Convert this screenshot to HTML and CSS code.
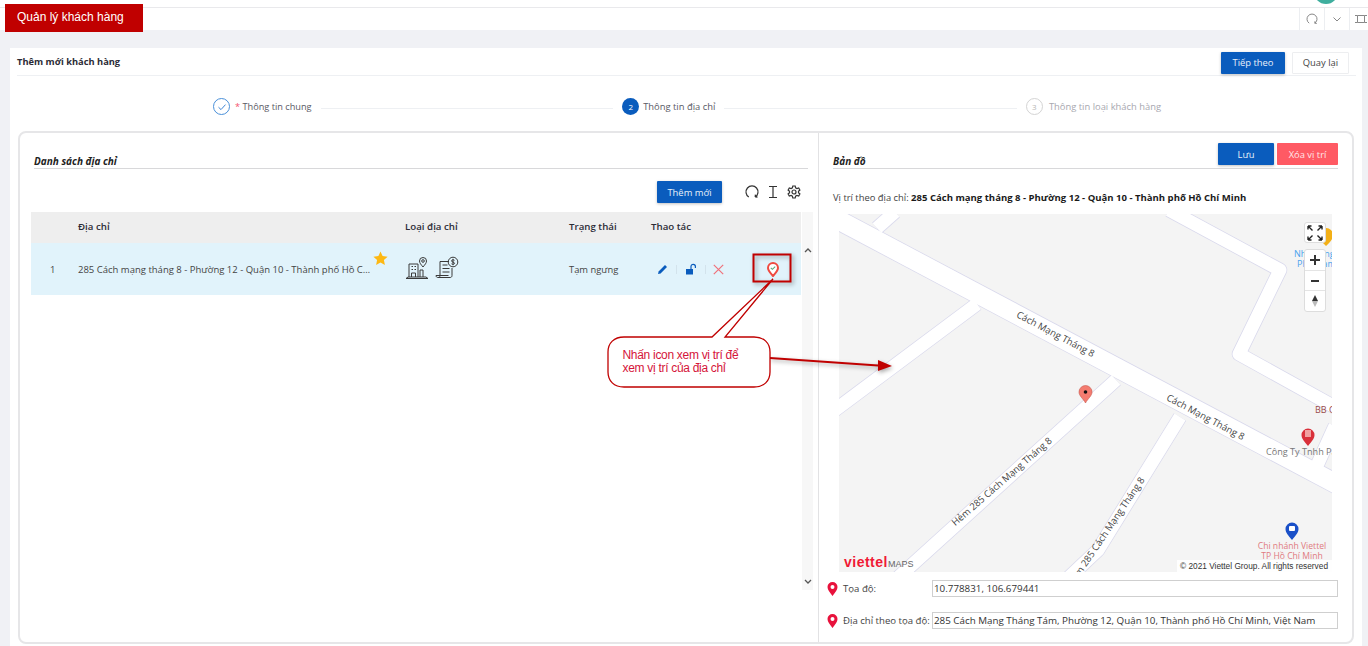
FILE: index.html
```html
<!DOCTYPE html>
<html lang="vi">
<head>
  <meta charset="UTF-8" />
  <meta name="viewport" content="width=device-width, initial-scale=1" />
  <title>Quản lý khách hàng</title>
  <link rel="stylesheet" href="styles.css">
</head>
<body>
  <div class="top-strip"><span class="avatar"></span></div>

  <div class="tab-bar">
    <span class="tab-tool">
      <svg width="12" height="12" viewBox="0 0 12 12"><path class="line-gray" d="M3.2 10.2A5 5 0 1 1 8.8 10.2M8.8 10.2l.2-2M8.8 10.2l2 .2"/></svg>
    </span>
    <span class="tab-tool">
      <svg width="10" height="10" viewBox="0 0 10 10"><path class="line-gray" d="M1.5 3.5 5 7l3.5-3.5"/></svg>
    </span>
    <span class="tab-tool tab-tool-last">
      <svg width="12" height="12" viewBox="0 0 12 12"><path class="line-gray" d="M2.5 2.5h7v7h-7zM0 2.5h2.500M9.500 2.500H12M0 9.500h2.500M9.500 9.500H12"/></svg>
    </span>
  </div>

  <div class="page-title">Quản lý khách hàng</div>

  <main class="content">
    <section class="card">
      <header class="card-head">
        <h1>Thêm mới khách hàng</h1>
        <div class="card-actions">
          <button class="btn btn-primary btn-next">Tiếp theo</button>
          <button class="btn btn-plain">Quay lại</button>
        </div>
      </header>

      <div class="steps">
        <div class="step">
          <span class="step-dot step-done">
            <svg width="10" height="10" viewBox="0 0 10 10"><path d="M1.500 5.200 4 7.600 8.500 2.600" fill="none" stroke="#3f86d6" stroke-width="1"/></svg>
          </span>
          <span class="step-text step-text-first"><span class="req">*</span> Thông tin chung</span>
        </div>
        <span class="step-line"></span>
        <div class="step step-current">
          <span class="step-dot step-active">2</span>
          <span class="step-text">Thông tin địa chỉ</span>
        </div>
        <span class="step-line"></span>
        <div class="step">
          <span class="step-dot step-todo">3</span>
          <span class="step-text step-text-todo">Thông tin loại khách hàng</span>
        </div>
      </div>

      <div class="panel">
        <div class="panel-left">
          <h2 class="section-title section-title-left">Danh sách địa chỉ</h2>

          <div class="table-tools">
            <button class="btn btn-primary btn-add">Thêm mới</button>
            <svg class="tool-icon" width="14" height="14" viewBox="0 0 14 14"><path class="line-dark" d="M3.800 12A6 6 0 1 1 10.200 12M10.200 12l.2-2.400M10.200 12l2.300.2"/></svg>
            <svg class="tool-icon" width="14" height="14" viewBox="0 0 14 14"><path class="line-dark" d="M3 1.500h8M3 12.500h8M7 1.500v11"/></svg>
            <svg class="tool-icon" width="14" height="14" viewBox="0 0 14 14"><path class="line-dark" d="M5.800 1h2.400l.4 1.800 1.300.7 1.800-.6 1.200 2.100-1.400 1.200v1.600l1.400 1.200-1.200 2.100-1.800-.6-1.300.7L8.200 13H5.800l-.4-1.800-1.300-.7-1.800.6-1.200-2.100 1.400-1.200V6.200L1.100 5l1.200-2.100 1.800.6 1.300-.7z"/><circle class="line-dark" cx="7" cy="7" r="2"/></svg>
          </div>

          <div class="table-wrap">
            <table class="address-table">
              <colgroup>
                <col class="col-no"><col class="col-address"><col class="col-type"><col class="col-status"><col class="col-actions">
              </colgroup>
              <thead>
                <tr>
                  <th></th>
                  <th>Địa chỉ</th>
                  <th>Loại địa chỉ</th>
                  <th>Trạng thái</th>
                  <th>Thao tác</th>
                </tr>
              </thead>
              <tbody>
                <tr>
                  <td class="cell-no">1</td>
                  <td>
                    <div class="address-cell">
                      <span class="address-text">285 Cách mạng tháng 8 - Phường 12 - Quận 10 - Thành phố Hồ Chí Minh</span>
                      <svg class="star" width="15" height="15" viewBox="0 0 15 15"><path d="M7.500.5l2.100 4.600 5 .6-3.700 3.400 1 4.900-4.400-2.500L3.100 14l1-4.900L.4 5.700l5-.6z" fill="#fdb813"/></svg>
                    </div>
                  </td>
                  <td>
                    <div class="type-icons">
                      <svg width="24" height="24" viewBox="0 0 24 24"><g class="line-icon"><path d="M4 21V8h9v13M6.500 21v-4h4v4M1 22.500h22l-2-1.500H3z"/><path d="M6.500 10.500h1.500M9.500 10.500H11M6.500 13.500h1.500M9.500 13.500H11"/><path d="M18 11c-2-2.500-3.500-4-3.500-6a3.500 3.500 0 0 1 7 0c0 2-1.500 3.500-3.500 6z"/><circle cx="18" cy="5" r="1.300"/><path d="M15 21v-7h3v7"/></g></svg>
                      <svg width="24" height="24" viewBox="0 0 24 24"><g class="line-icon"><path d="M14 5.500H5v14c0 1.500-1 2-2 2h12c1 0 2-.5 2-2V12"/><path d="M3 21.500c-1 0-2-.5-2-2h12.500"/><path d="M7.500 9h5M7.500 12.500h7M7.500 16h7"/><circle cx="18" cy="6" r="4.800"/><path d="M19.500 4.300c-1-.8-3-.6-3 .7s3 .9 3 2.200-2 1.500-3 .6M18 2.800v6.400"/></g></svg>
                    </div>
                  </td>
                  <td>Tạm ngưng</td>
                  <td>
                    <div class="row-actions">
                      <svg width="11" height="11" viewBox="0 0 11 11"><path d="M1 10l.6-2.600L8 1l2 2-6.400 6.400z" fill="#0a5cbd"/></svg>
                      <span class="action-sep"></span>
                      <svg width="12" height="12" viewBox="0 0 12 12"><rect x="1" y="6" width="7" height="5.500" fill="#0a5cbd"/><path d="M6 6V3.500a2.200 2.200 0 0 1 4.400 0V5" fill="none" stroke="#0a5cbd" stroke-width="1.200"/></svg>
                      <span class="action-sep action-sep-tight"></span>
                      <svg width="11" height="11" viewBox="0 0 11 11"><path d="M.8.8l9.400 9.400M10.200.8.800 10.200" fill="none" stroke="#f0717a" stroke-width="1.200"/></svg>
                      <svg class="action-pin" width="12" height="15" viewBox="0 0 12 15"><path d="M6 14C3 10.500 1 8.500 1 6a5 5 0 0 1 10 0c0 2.500-2 4.500-5 8z" fill="#fff" stroke="#ef4a40" stroke-width="2"/><path d="M3.800 5.800 5.400 7.300 8.200 4.600" fill="none" stroke="#5aa67c" stroke-width="1.100"/></svg>
                    </div>
                  </td>
                </tr>
              </tbody>
            </table>
            <div class="scrollbar">
              <svg width="8" height="6" viewBox="0 0 8 6"><path d="M1 5l3-3 3 3" fill="none" stroke="#555" stroke-width="1.300"/></svg>
              <svg width="8" height="6" viewBox="0 0 8 6"><path d="M1 1l3 3 3-3" fill="none" stroke="#555" stroke-width="1.300"/></svg>
            </div>
          </div>
        </div>

        <div class="panel-right">
          <div class="map-head">
            <h2 class="section-title">Bản đồ</h2>
            <div class="map-actions">
              <button class="btn btn-primary btn-save">Lưu</button>
              <button class="btn btn-danger">Xóa vị trí</button>
            </div>
          </div>

          <p class="map-address">Vị trí theo địa chỉ: <strong>285 Cách mạng tháng 8 - Phường 12 - Quận 10 - Thành phố Hồ Chí Minh</strong></p>

          <div class="map">
            <svg class="map-canvas" width="493" height="358" viewBox="0 0 493 358">
              <defs>
                <g id="side-roads">
                  <path d="M277 166 65 358 50 372"/>
                  <path d="M138 90-12 202"/>
                  <path d="M341 203 259 336 225 368"/>
                  <path d="M38 14 56-2"/>
                  <path d="M330-4 441 56 400 140 503 197"/>
                  <path d="M476 256 496 212"/>
                </g>
              </defs>
              <use href="#side-roads" class="road-edge"/>
              <path d="M-10 1 503 273" class="road-edge road-main-edge"/>
              <use href="#side-roads" class="road-fill"/>
              <path d="M-10 1 503 273" class="road-fill road-main-fill"/>

              <text class="road-label" transform="translate(215 123) rotate(28)" text-anchor="middle">Cách Mạng Tháng 8</text>
              <text class="road-label" transform="translate(365 206) rotate(28)" text-anchor="middle">Cách Mạng Tháng 8</text>
              <text class="road-label" transform="translate(165 270) rotate(-41)" text-anchor="middle">Hẻm 285 Cách Mạng Tháng 8</text>
              <text class="road-label" transform="translate(306 266) rotate(-56)" text-anchor="end">Hẻm 285 Cách Mạng Tháng 8</text>

              <text class="poi poi-blue" x="455" y="43">Nhà hàng</text>
              <text class="poi poi-blue" x="458" y="53">Phở Nam</text>
              <path d="M487 32c-4-4-7-7-7-11a7 7 0 0 1 14 0c0 4-3 7-7 11z" fill="#f3b017"/>
              <text class="poi poi-brown" x="476" y="199">BB C</text>
              <path d="M469 232c-4-5-6.500-7.500-6.500-11a6.500 6.500 0 0 1 13 0c0 3.500-2.500 6-6.500 11z" fill="#d9303a"/>
              <rect x="466" y="216" width="6" height="7" fill="#f0a0a0"/>
              <text class="poi poi-gray" x="427" y="241">Công Ty Tnhh Pa</text>
              <path d="M453 326c-4-5-6.500-7.500-6.500-11a6.500 6.500 0 0 1 13 0c0 3.500-2.500 6-6.500 11z" fill="#1a50c8"/>
              <rect x="450" y="312" width="6" height="5" rx="1" fill="#fff"/>
              <text class="poi poi-pink" x="453" y="335" text-anchor="middle">Chi nhánh Viettel</text>
              <text class="poi poi-pink" x="453" y="345" text-anchor="middle">TP Hồ Chí Minh</text>

              <path d="M246.500 189c-2-4-6.500-7-6.500-11a6.500 6.500 0 0 1 13 0c0 4-4.500 7-6.500 11z" fill="#f47c70" stroke="#c8564c" stroke-width=".6"/>
              <circle cx="246.500" cy="178" r="1.800" fill="#111"/>

              <text class="logo-word" x="5" y="353">viettel</text>
              <text class="logo-maps" x="49" y="353">MAPS</text>
            </svg>

            <div class="map-control map-fullscreen">
              <svg width="16" height="16" viewBox="0 0 16 16"><path d="M1 1l4.500 4.500M1 1h3.500M1 1v3.500M15 1l-4.500 4.500M15 1h-3.500M15 1v3.500M1 15l4.500-4.500M1 15h3.500M1 15v-3.500M15 15l-4.500-4.500M15 15h-3.500M15 15v-3.500" fill="none" stroke="#222" stroke-width="1.400"/></svg>
            </div>
            <div class="map-control map-zoom">
              <span class="zoom-btn">
                <svg width="10" height="10" viewBox="0 0 10 10"><path d="M0 5h10M5 0v10" stroke="#333" stroke-width="2"/></svg>
              </span>
              <span class="zoom-btn">
                <svg width="10" height="10" viewBox="0 0 10 10"><path d="M1 5h8" stroke="#333" stroke-width="2"/></svg>
              </span>
              <span class="zoom-btn">
                <svg width="8" height="12" viewBox="0 0 8 12"><path d="M4 0l3 6H1z" fill="#333"/><path d="M4 12 1 6h6z" fill="#bbb"/></svg>
              </span>
            </div>
            <div class="map-copy">© 2021 Viettel Group. All rights reserved</div>
          </div>

          <div class="coord-row">
            <svg class="coord-pin" width="11" height="14" viewBox="0 0 11 14"><path fill-rule="evenodd" d="M5.500 14C2.500 10 .5 7.800.5 5a5 5 0 0 1 10 0c0 2.800-2 5-5 9zm0-7a2 2 0 1 0 0-4 2 2 0 0 0 0 4z" fill="#e8123c"/></svg>
            <label class="coord-label">Tọa độ:</label>
            <input class="coord-input" value="10.778831, 106.679441">
          </div>
          <div class="coord-row coord-row-second">
            <svg class="coord-pin" width="11" height="14" viewBox="0 0 11 14"><path fill-rule="evenodd" d="M5.500 14C2.500 10 .5 7.800.5 5a5 5 0 0 1 10 0c0 2.800-2 5-5 9zm0-7a2 2 0 1 0 0-4 2 2 0 0 0 0 4z" fill="#e8123c"/></svg>
            <label class="coord-label">Địa chỉ theo tọa độ:</label>
            <input class="coord-input" value="285 Cách Mạng Tháng Tám, Phường 12, Quận 10, Thành phố Hồ Chí Minh, Việt Nam">
          </div>
        </div>
      </div>
    </section>
  </main>

  <!-- red annotation drawn over the screenshot -->
  <svg class="annotation" width="1368" height="646" viewBox="0 0 1368 646">
    <rect class="note-box" x="753.500" y="254.500" width="37" height="27"/>
    <path class="note-arrow" d="M770 358 878 365.500"/>
    <path class="note-head" d="M878 360 892 366 878 371z"/>
    <path class="note-bubble" d="M624 337H712L773 279 725 337H754C764 337 770 343 770 352V372C770 381 764 387 754 387H624C614 387 608 381 608 372V352C608 343 614 337 624 337z"/>
    <text class="note-text" x="622.500" y="359">Nhấn icon xem vị trí để</text>
    <text class="note-text" x="622.500" y="372">xem vị trí của địa chỉ</text>
  </svg>
</body>
</html>
```

FILE: styles.css
```css
* {
  box-sizing: border-box;
}
html, body {
  height: 646px;
  overflow: hidden;
}
body {
  margin: 0;
  background: #f0f1f5;
  color: #333;
  font-family: 'Open Sans', 'Noto Sans', sans-serif;
  font-size: 9.400px;
}
h1, h2, p {
  margin: 0;
}
.page-title {
  position: absolute;
  left: 5px;
  top: 4px;
  width: 138px;
  height: 28px;
  padding-left: 12px;
  background: #c00000;
  color: white;
  font: 12px/27px 'Liberation Sans', sans-serif;
}
.top-strip {
  position: relative;
  height: 8px;
  background: white;
  border-bottom: 1px solid #e9e9ec;
  overflow: hidden;
}
.avatar {
  position: absolute;
  left: 1314px;
  top: -20px;
  width: 24px;
  height: 24px;
  border-radius: 50%;
  background: #3fae9e;
}
.tab-bar {
  height: 22px;
  background: white;
  display: flex;
  justify-content: flex-end;
}
.tab-tool {
  width: 25px;
  display: flex;
  align-items: center;
  justify-content: center;
  border-left: 1px solid #eceef1;
}
.tab-tool-last {
  width: 19px;
  padding-left: 4px;
}
.line-gray {
  fill: none;
  stroke: #888;
  stroke-width: 1;
}
.line-dark {
  fill: none;
  stroke: #333;
  stroke-width: 1.2;
}
.line-icon {
  fill: none;
  stroke: #3a3a3a;
  stroke-width: 1;
}
.content {
  padding: 18px 6px 0 10px;
}
.card {
  height: 598px;
  background: white;
  padding: 0 6px 0 7px;
}
.card-head {
  height: 28px;
  display: flex;
  align-items: center;
  justify-content: space-between;
  border-bottom: 1px solid #eef0f3;
}
.card-head h1 {
  font-size: 9.300px;
  font-weight: 700;
  color: #2b2b36;
  padding-bottom: 1px;
}
.card-actions {
  display: flex;
  gap: 7px;
  margin-right: 7px;
  margin-top: 2px;
}
.btn {
  height: 22px;
  padding: 0;
  border-radius: 1px;
  border: 1px solid transparent;
  font-family: inherit;
  font-size: 9.400px;
}
.btn-primary {
  background: #0a5cbd;
  color: #e8f0fa;
  box-shadow: 0 1px 3px rgba(0,0,0,0.25);
}
.btn-danger {
  width: 61px;
  background: #ff5a64;
  color: #ffe6e8;
}
.btn-plain {
  width: 57px;
  background: white;
  border-color: #edeef0;
  color: #444;
}
.btn-next {
  width: 64px;
}
.btn-add {
  width: 65px;
  margin-right: 16px;
}
.btn-save {
  width: 56px;
}

.steps {
  height: 55px;
  display: flex;
  align-items: center;
  padding: 6px 195px 0 196px;
  gap: 9px;
}
.step {
  display: flex;
  align-items: center;
  gap: 5px;
}
.step-current {
  gap: 4px;
}
.step-dot {
  width: 17px;
  height: 17px;
  border-radius: 50%;
  display: flex;
  align-items: center;
  justify-content: center;
  font-size: 8px;
}
.step-done {
  border: 1px solid #4a90d9;
}
.step-active {
  background: #0a5cbd;
  color: white;
}
.step-todo {
  border: 1px solid #d4d4d4;
  color: #b5b5b5;
}
.step-text {
  color: #5a5a66;
}
.step-text-first {
  font-size: 9.200px;
}
.step-text-todo {
  color: #a8a8b0;
  margin-left: 1px;
}
.req {
  color: #f4516c;
}
.step-line {
  flex: 1;
  height: 1px;
  background: #eef0f3;
  margin-top: 4px;
}

.panel {
  margin-left: 1px;
  width: 1336px;
  height: 513px;
  border: 2px solid #e6e6e8;
  border-radius: 8px;
  display: grid;
  grid-template-columns: 799px minmax(0, 1fr);
}
.panel-left {
  padding-left: 11px;
  border-right: 1px solid #e2e2e4;
}
.panel-right {
  padding: 0 14px;
}
.section-title {
  font-size: 10px;
  font-weight: 700;
  font-style: italic;
  color: #222;
}
.section-title-left {
  height: 36px;
  margin: 0 10px 0 3px;
  padding-top: 21px;
  border-bottom: 1px solid #d8d8da;
}
.table-tools {
  height: 22px;
  margin-top: 12px;
  display: flex;
  align-items: center;
  justify-content: flex-end;
  gap: 7px;
  padding-right: 17px;
}
.table-wrap {
  margin-top: 9px;
  display: flex;
}
.address-table {
  width: 770px;
  table-layout: fixed;
  border-collapse: collapse;
  align-self: flex-start;
}
.col-no { width: 47px; }
.col-address { width: 327px; }
.col-type { width: 164px; }
.col-status { width: 82px; }
.address-table th {
  height: 31px;
  background: #eeeeee;
  text-align: left;
  font-size: 9.700px;
  font-weight: 600;
  color: #2b2b36;
  padding: 0 0 2px;
}
.address-table td {
  height: 52px;
  background: #e1f3fb;
  padding: 0;
  color: #444;
}
.cell-no {
  padding-left: 19px !important;
}
.address-cell {
  display: flex;
  align-items: center;
  position: relative;
}
.address-text {
  width: 294px;
  font-size: 9.500px;
  white-space: nowrap;
  overflow: hidden;
  text-overflow: ellipsis;
}
.star {
  position: absolute;
  left: 295px;
  top: -12px;
}
.type-icons {
  display: flex;
  gap: 6px;
  margin-bottom: 2px;
}
.row-actions {
  display: flex;
  align-items: center;
  padding-left: 6px;
  position: relative;
}
.action-sep {
  width: 1px;
  height: 9px;
  margin: 0 8px;
  background: #d3e3ec;
}
.action-sep-tight {
  margin-right: 7px;
}
.action-pin {
  position: absolute;
  left: 116px;
  top: -1px;
}
.scrollbar {
  width: 11px;
  height: 378px;
  margin-left: 1px;
  background: #f7f7f7;
  display: flex;
  flex-direction: column;
  align-items: center;
  justify-content: space-between;
  padding: 35px 0 5px;
}

.map-head {
  height: 36px;
  border-bottom: 1px solid #d8d8da;
  display: flex;
  justify-content: space-between;
  align-items: flex-end;
}
.map-actions {
  display: flex;
  gap: 3px;
  padding-bottom: 3px;
}
.map-address {
  height: 45px;
  padding-top: 22px;
  color: #444;
}
.map-address strong {
  color: #1a1a1a;
  font-size: 9.550px;
}
.map {
  position: relative;
  width: 493px;
  height: 358px;
  margin-left: 6px;
  background: #f4f4f4;
  overflow: hidden;
}
.map-canvas {
  display: block;
}
.road-edge {
  fill: none;
  stroke: #d9d9ec;
  stroke-width: 14.500px;
  stroke-linejoin: round;
}
.road-fill {
  fill: none;
  stroke: white;
  stroke-width: 13px;
  stroke-linejoin: round;
}
.road-main-edge {
  stroke-width: 20.500px;
}
.road-main-fill {
  stroke-width: 19px;
}
.road-label {
  font-size: 9.500px;
  fill: #444;
}
.poi {
  font-size: 9px;
}
.poi-blue { fill: #4aa3ee; }
.poi-brown { fill: #9a4a4a; }
.poi-gray { fill: #777; font-size: 9.100px; }
.poi-pink { fill: #e07a80; font-size: 8.600px; }
.logo-word {
  font: 700 14px 'Liberation Sans', sans-serif;
  fill: #f01a35;
  letter-spacing: .5px;
}
.logo-maps {
  font: 9px 'Liberation Sans', sans-serif;
  fill: #666;
}
.map-control {
  position: absolute;
  left: 465px;
  width: 22px;
  background: white;
  border: 1px solid #ddd;
  border-radius: 3px;
}
.map-fullscreen {
  top: 8px;
  height: 21px;
  display: flex;
  align-items: center;
  justify-content: center;
}
.map-zoom {
  top: 35px;
  height: 63px;
  display: flex;
  flex-direction: column;
}
.zoom-btn {
  flex: 1;
  display: flex;
  align-items: center;
  justify-content: center;
  border-bottom: 1px solid #e4e4e4;
}
.zoom-btn:last-child {
  border-bottom: 0;
}
.map-copy {
  position: absolute;
  right: 0;
  bottom: 0;
  height: 12px;
  padding: 0 4px 0 3px;
  background: rgba(255,255,255,0.85);
  color: #333;
  font: 8.300px/12px 'Liberation Sans', sans-serif;
}
.coord-row {
  display: flex;
  align-items: center;
  margin: 8px 0 0 -6px;
  height: 17px;
}
.coord-row-second {
  margin-top: 15px;
}
.coord-pin {
  flex: none;
}
.coord-label {
  margin-left: 5px;
  width: 89px;
  flex: none;
  font-size: 9.600px;
  color: #444;
  white-space: nowrap;
}
.coord-input {
  flex: 1;
  min-width: 0;
  height: 17px;
  border: 1px solid #cfcfcf;
  padding: 0 1px;
  font: 9.800px 'Open Sans', sans-serif;
  color: #333;
  outline: none;
}

.annotation {
  position: absolute;
  left: 0;
  top: 0;
  pointer-events: none;
}
.note-box {
  fill: none;
  stroke: #c00000;
  stroke-width: 2;
  filter: drop-shadow(2px 2px 2px rgba(0,0,0,0.35));
}
.note-arrow {
  fill: none;
  stroke: #c00000;
  stroke-width: 2;
  filter: drop-shadow(1px 2px 2px rgba(0,0,0,0.35));
}
.note-head {
  fill: #c00000;
  filter: drop-shadow(1px 2px 2px rgba(0,0,0,0.35));
}
.note-bubble {
  fill: white;
  stroke: #c00000;
  stroke-width: 1.300;
}
.note-text {
  font: 12px 'Liberation Sans', sans-serif;
  fill: #d5143a;
  letter-spacing: -0.3px;
}
```
